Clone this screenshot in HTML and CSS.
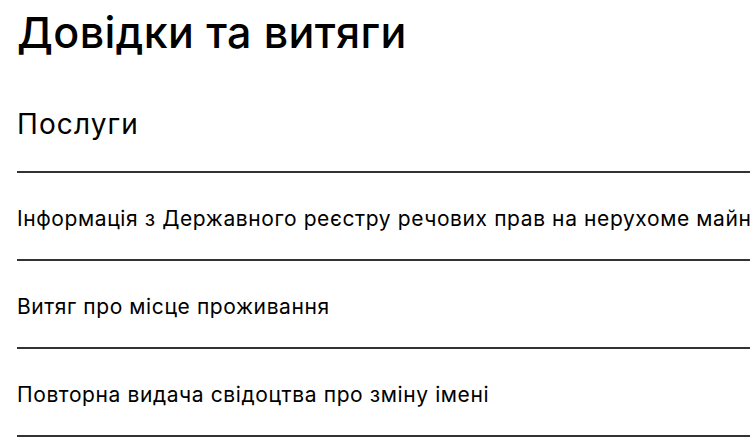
FILE: index.html
```html
<!DOCTYPE html>
<html lang="uk">
<head>
    <meta charset="UTF-8">
    <meta name="viewport" content="width=device-width, initial-scale=1.0">
    <title>Довідки та витяги</title>
    <link rel="stylesheet" href="styles.css">
</head>
<body>
    <main class="page">
        <h1 class="page-title">Довідки та витяги</h1>

        <!-- Services list -->
        <section class="services">
            <h2 class="services-title">Послуги</h2>
            <ul class="services-list">
                <li class="service"><a href="#">Інформація з Державного реєстру речових прав на нерухоме майно</a></li>
                <li class="service"><a href="#">Витяг про місце проживання</a></li>
                <li class="service"><a href="#">Повторна видача свідоцтва про зміну імені</a></li>
            </ul>
        </section>
    </main>
</body>
</html>
```

FILE: styles.css
```css
body {
    margin: 0;
    font-family: Inter, "Noto Sans", sans-serif;
    color: #000;
    background-color: #fff;
}

.page {
    padding: 7px 0 0 17px;
    overflow: hidden;
}

.page-title {
    margin: 0;
    font-size: 43px;
    line-height: 50px;
    font-weight: 500;
    letter-spacing: 0.4px;
}

/* Services block */
.services-title {
    margin: 50px 0 30px;
    font-size: 28px;
    line-height: 34px;
    font-weight: 400;
    letter-spacing: 1.1px;
}

.services-list {
    list-style: none;
    margin: 0;
    padding: 0;
    border-top: 2px solid #333;
}

.service {
    display: flex;
    align-items: center;
    box-sizing: border-box;
    height: 88px;
    padding-top: 4px;
    border-bottom: 2px solid #333;
    white-space: nowrap;
}

.service a {
    font-size: 21px;
    letter-spacing: 0.6px;
    color: #000;
    text-decoration: none;
}
```
